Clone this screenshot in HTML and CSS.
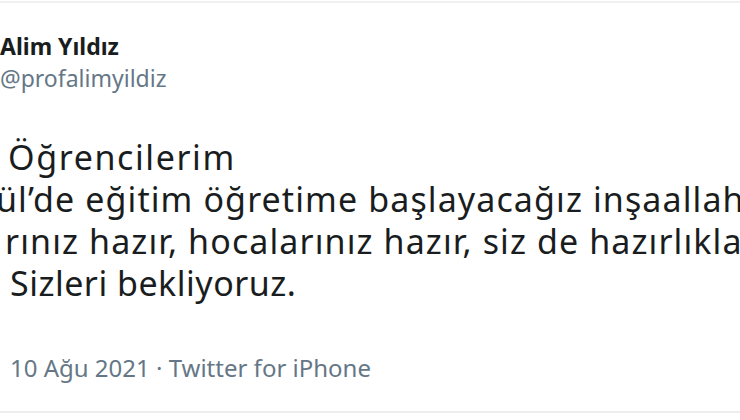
FILE: index.html
```html
<!DOCTYPE html>
<html lang="tr">
<head>
<meta charset="utf-8">
<link rel="stylesheet" href="styles.css">
</head>
<body>
<div class="card">
  <div class="head">
    <div class="name">Alim Yıldız</div>
    <div class="handle">@profalimyildiz</div>
  </div>
  <div class="body">
    <div class="line l1">Öğrencilerim</div>
    <div class="line l2">ül’de eğitim öğretime başlayacağız inşaallah.</div>
    <div class="line l3">rınız hazır, hocalarınız hazır, siz de hazırlıklarınızı yapın.</div>
    <div class="line l4">Sizleri bekliyoruz.</div>
  </div>
  <div class="meta">10 Ağu 2021 · Twitter for iPhone</div>
</div>
</body>
</html>
```

FILE: styles.css
```css
html, body {
  margin: 0;
  padding: 0;
  background: #ffffff;
  overflow: hidden;
}
.card {
  width: 740px;
  height: 412px;
  box-sizing: border-box;
  border-top: 2px solid #eef0f2;
  border-bottom: 2px solid #eceef0;
  margin-top: 1px;
  overflow: hidden;
  font-family: "Noto Sans", "Open Sans", sans-serif;
  color: #1a1d20;
}
.head {
  padding-top: 29px;
  display: flex;
  flex-direction: column;
}
.name {
  font-size: 23px;
  font-weight: 700;
  line-height: 28px;
  white-space: nowrap;
}
.handle {
  margin-top: 2px;
  font-size: 23px;
  color: #657786;
  line-height: 32px;
  white-space: nowrap;
}
.body {
  padding-top: 42px;
  font-size: 34px;
  line-height: 42px;
  letter-spacing: 1.1px;
}
.line {
  white-space: nowrap;
}
.l1 { padding-left: 8px; letter-spacing: 1.6px; }
.l2 { margin-left: -4px; }
.l3 { padding-left: 5px; }
.l4 { padding-left: 10px; letter-spacing: 0.5px; }
.meta {
  margin-top: 49px;
  padding-left: 10px;
  font-size: 24px;
  line-height: 30px;
  color: #657786;
  white-space: nowrap;
}
```
